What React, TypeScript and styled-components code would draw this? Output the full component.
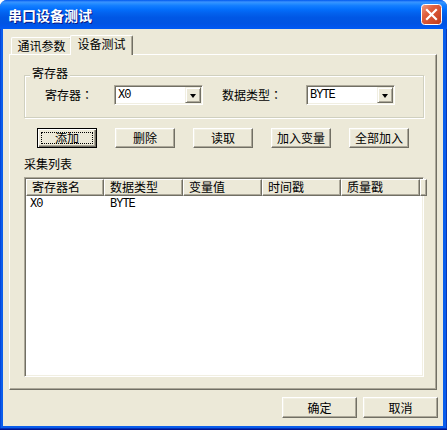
import React from 'react';
import styled, { createGlobalStyle, css } from 'styled-components';

const CJK = `"Noto Sans CJK SC", "Liberation Sans", sans-serif`;
const CJK_TC = `"Noto Sans CJK TC", "Noto Sans CJK SC", "Liberation Sans", sans-serif`;
const MONO = `"Liberation Mono", "DejaVu Sans Mono", monospace`;

const GlobalStyle = createGlobalStyle`
  html, body { margin: 0; padding: 0; background: #ffffff; }
  body { font-family: ${CJK}; font-size: 12px; color: #000; }
  * { box-sizing: border-box; }
`;

const Window = styled.div`
  width: 447px;
  height: 430px;
  display: flex;
  flex-direction: column;
  background: linear-gradient(90deg, #0031C8 0px, #0A5DEB 1px, #0A5DEB 446px, #00138C 447px);
  border-radius: 7px 7px 0 0;
  overflow: hidden;
  box-shadow: inset 0 -1px 0 #00138C, inset 0 -2px 0 #0030B8;
`;

const TitleBar = styled.div`
  height: 29px;
  flex: none;
  display: flex;
  align-items: center;
  justify-content: space-between;
  padding: 0 5px 0 8px;
  background: linear-gradient(180deg, #0058EE 0%, #3A93FF 7%, #288EFF 12%, #127DFF 20%, #036FFC 32%, #0262EE 45%, #0057E5 60%, #0054E3 80%, #0055EB 90%, #005BF5 100%);
`;

const Title = styled.span`
  color: #ffffff;
  font-family: ${CJK};
  font-weight: bold;
  font-size: 14px;
  line-height: 16px;
  text-shadow: 1px 1px 0 #0A1883;
`;

const CloseBox = styled.div`
  width: 21px;
  height: 21px;
  display: flex;
`;

const Client = styled.div`
  flex: 1;
  margin: 0 4px 4px 3px;
  background: #ECE9D8;
  display: flex;
  flex-direction: column;
  padding: 6px 6px 0 6px;
`;

const TabStrip = styled.div`
  height: 19px;
  flex: none;
  display: flex;
  align-items: flex-end;
  padding-left: 2px;
  position: relative;
  z-index: 1;
`;

const Tab = styled.div<{ $active?: boolean }>`
  width: 61px;
  height: 17px;
  background: #ECE9D8;
  border-top: 1px solid #ffffff;
  border-left: 1px solid #ffffff;
  border-right: 1px solid #716F64;
  border-radius: 2px 2px 0 0;
  box-shadow: inset -1px 0 0 #ACA899;
  font-size: 12px;
  line-height: 15px;
  text-align: center;
  white-space: nowrap;
  ${(p) =>
    p.$active &&
    css`
      width: 63px;
      height: 20px;
      margin-left: -2px;
      margin-bottom: -1px;
      line-height: 16px;
      position: relative;
      z-index: 2;
    `}
`;

const Panel = styled.div`
  flex: 1;
  display: flex;
  flex-direction: column;
  border-top: 1px solid #ffffff;
  border-left: 1px solid #ffffff;
  border-right: 1px solid #716F64;
  border-bottom: 1px solid #716F64;
  box-shadow: inset -1px -1px 0 #ACA899;
  padding: 20px 12px 12px 14px;
`;

const GroupBox = styled.div`
  position: relative;
  border: 1px solid #D0D0BF;
  box-shadow: inset 1px 1px 0 #ffffff, 1px 1px 0 #ffffff;
  padding: 9px 0 12px 20px;
`;

const GroupTitle = styled.span`
  position: absolute;
  top: -10px;
  left: 5px;
  padding: 0 2px;
  background: #ECE9D8;
  font-size: 12px;
  line-height: 14px;
`;

const FieldRow = styled.div`
  display: flex;
  align-items: center;
  height: 20px;
`;

const FieldLabel = styled.span<{ $w: number; $ml?: number }>`
  width: ${(p) => p.$w}px;
  margin-left: ${(p) => p.$ml ?? 0}px;
  font-family: ${CJK_TC};
  font-size: 12px;
  line-height: 14px;
  white-space: nowrap;
`;

const Combo = styled.div`
  width: 89px;
  height: 20px;
  display: flex;
  align-items: stretch;
  background: #ffffff;
  border: 1px solid;
  border-color: #ACA899 #ffffff #ffffff #ACA899;
  box-shadow: inset 1px 1px 0 #716F64, inset -1px -1px 0 #F1EFE2;
  padding: 1px;
`;

const ComboText = styled.span`
  flex: 1;
  font-family: ${MONO};
  font-size: 12px;
  letter-spacing: -1px;
  line-height: 16px;
  padding-left: 2px;
`;

const ComboButton = styled.div`
  width: 16px;
  background: #ECE9D8;
  border: 1px solid;
  border-color: #F1EFE2 #716F64 #716F64 #F1EFE2;
  box-shadow: inset 1px 1px 0 #ffffff, inset -1px -1px 0 #ACA899;
  display: flex;
  align-items: center;
  justify-content: center;
`;

const Arrow = styled.span`
  width: 0;
  height: 0;
  border-left: 3.5px solid transparent;
  border-right: 3.5px solid transparent;
  border-top: 4px solid #000000;
  margin-top: 1px;
`;

const ButtonRow = styled.div`
  display: flex;
  gap: 18px;
  margin-top: 10px;
  padding-left: 13px;
`;

const Button = styled.button<{ $w?: number; $h?: number; $focused?: boolean }>`
  width: ${(p) => p.$w ?? 60}px;
  height: ${(p) => p.$h ?? 20}px;
  padding: 3px;
  margin: 0;
  display: flex;
  background: #ECE9D8;
  font-family: ${CJK};
  font-size: 12px;
  color: #000;
  border: 1px solid;
  border-color: #ffffff #716F64 #716F64 #ffffff;
  box-shadow: inset -1px -1px 0 #ACA899, inset 1px 1px 0 #F1EFE2;
  cursor: default;
  ${(p) =>
    p.$focused &&
    css`
      border: 1px solid #000000;
      box-shadow: inset 1px 1px 0 #ffffff, inset -1px -1px 0 #716F64, inset -2px -2px 0 #ACA899;
    `}
`;

const ButtonFace = styled.span<{ $focused?: boolean }>`
  flex: 1;
  display: flex;
  align-items: center;
  justify-content: center;
  line-height: 12px;
  border: 1px dotted ${(p) => (p.$focused ? '#000000' : 'transparent')};
  white-space: nowrap;
`;

const ListLabel = styled.div`
  margin-top: 9px;
  font-size: 12px;
  line-height: 14px;
`;

const ListView = styled.div`
  flex: 1;
  margin-top: 6px;
  display: flex;
  flex-direction: column;
  background: #ffffff;
  border: 1px solid;
  border-color: #ACA899 #ffffff #ffffff #ACA899;
  box-shadow: inset 1px 1px 0 #716F64, inset -1px -1px 0 #F1EFE2;
  padding: 1px;
`;

const HeaderRow = styled.div`
  display: flex;
  height: 17px;
`;

const HeaderCell = styled.div<{ $w?: number }>`
  width: ${(p) => (p.$w ? `${p.$w}px` : 'auto')};
  flex: ${(p) => (p.$w ? 'none' : '1')};
  background: #ECE9D8;
  border-top: 1px solid #ffffff;
  border-left: 1px solid #ffffff;
  border-right: 1px solid #716F64;
  border-bottom: 1px solid #716F64;
  box-shadow: inset -1px -1px 0 #ACA899;
  padding-left: 5px;
  font-size: 12px;
  line-height: 14px;
  white-space: nowrap;
  overflow: hidden;
`;

const DataRow = styled.div`
  display: flex;
  height: 15px;
  margin-top: 1px;
`;

const DataCell = styled.div<{ $w: number; $pl: number }>`
  width: ${(p) => p.$w}px;
  padding-left: ${(p) => p.$pl}px;
  font-family: ${MONO};
  font-size: 12px;
  letter-spacing: -1px;
  line-height: 14px;
  white-space: nowrap;
`;

const Footer = styled.div`
  height: 36px;
  flex: none;
  display: flex;
  justify-content: flex-end;
  align-items: flex-start;
  gap: 6px;
  padding-top: 7px;
  margin-right: -1px;
`;

const columns = [
  { title: '寄存器名', w: 78 },
  { title: '数据类型', w: 79 },
  { title: '变量值', w: 79 },
  { title: '时间戳', w: 79 },
  { title: '质量戳', w: 79 },
];

const rows = [['X0', 'BYTE', '', '', '']];

const actions = ['添加', '删除', '读取', '加入变量', '全部加入'];

function CloseIcon() {
  return (
    <svg width="21" height="21" viewBox="0 0 21 21">
      <defs>
        <linearGradient id="cbg" x1="0" y1="0" x2="1" y2="1">
          <stop offset="0" stopColor="#F0A088" />
          <stop offset="0.35" stopColor="#E0603E" />
          <stop offset="1" stopColor="#C0391A" />
        </linearGradient>
      </defs>
      <rect x="0.5" y="0.5" width="20" height="20" rx="3" fill="url(#cbg)" stroke="#ffffff" />
      <path d="M6 6 L15 15 M15 6 L6 15" stroke="#ffffff" strokeWidth="2.2" strokeLinecap="square" />
    </svg>
  );
}

function ComboBox({ value }: { value: string }) {
  return (
    <Combo>
      <ComboText>{value}</ComboText>
      <ComboButton>
        <Arrow />
      </ComboButton>
    </Combo>
  );
}

export default function App() {
  return (
    <>
      <GlobalStyle />
      <Window>
        <TitleBar>
          <Title>串口设备测试</Title>
          <CloseBox>
            <CloseIcon />
          </CloseBox>
        </TitleBar>
        <Client>
          <TabStrip>
            <Tab>通讯参数</Tab>
            <Tab $active>设备测试</Tab>
          </TabStrip>
          <Panel>
            <GroupBox>
              <GroupTitle>寄存器</GroupTitle>
              <FieldRow>
                <FieldLabel $w={69}>寄存器：</FieldLabel>
                <ComboBox value="X0" />
                <FieldLabel $w={84} $ml={19}>数据类型：</FieldLabel>
                <ComboBox value="BYTE" />
              </FieldRow>
            </GroupBox>
            <ButtonRow>
              {actions.map((a, i) => (
                <Button key={a} $focused={i === 0}>
                  <ButtonFace $focused={i === 0}>{a}</ButtonFace>
                </Button>
              ))}
            </ButtonRow>
            <ListLabel>采集列表</ListLabel>
            <ListView>
              <HeaderRow>
                {columns.map((c) => (
                  <HeaderCell key={c.title} $w={c.w}>
                    {c.title}
                  </HeaderCell>
                ))}
                <HeaderCell />
              </HeaderRow>
              {rows.map((r, ri) => (
                <DataRow key={ri}>
                  {r.map((v, ci) => (
                    <DataCell key={ci} $w={columns[ci].w} $pl={ci === 0 ? 4 : 6}>
                      {v}
                    </DataCell>
                  ))}
                </DataRow>
              ))}
            </ListView>
          </Panel>
          <Footer>
            <Button $w={75} $h={21}>
              <ButtonFace>确定</ButtonFace>
            </Button>
            <Button $w={75} $h={21}>
              <ButtonFace>取消</ButtonFace>
            </Button>
          </Footer>
        </Client>
      </Window>
    </>
  );
}
